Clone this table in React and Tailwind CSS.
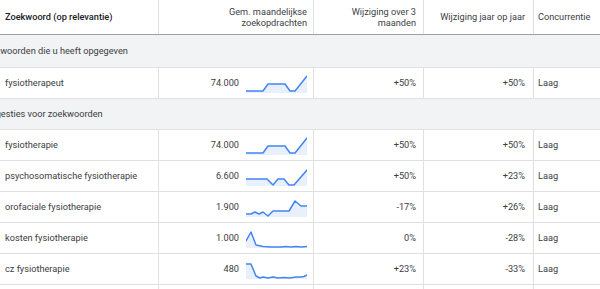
const groups = [
  {
    label: 'Zoekwoorden die u heeft opgegeven',
    height: 'h-[33px]',
    rows: [
      {
        keyword: 'fysiotherapeut',
        volume: '74.000',
        trend: [[0, 17], [17, 17], [22, 10], [39, 10], [44, 17], [49, 17], [61, 2]],
        threeMonths: '+50%',
        yoy: '+50%',
        competition: 'Laag',
      },
    ],
  },
  {
    label: 'Suggesties voor zoekwoorden',
    height: 'h-[31px]',
    rows: [
      {
        keyword: 'fysiotherapie',
        volume: '74.000',
        trend: [[0, 17], [17, 17], [22, 10], [39, 10], [44, 17], [49, 17], [61, 2]],
        threeMonths: '+50%',
        yoy: '+50%',
        competition: 'Laag',
      },
      {
        keyword: 'psychosomatische fysiotherapie',
        volume: '6.600',
        trend: [[0, 12], [21, 12], [27, 18], [32, 12], [38, 12], [43, 18], [48, 18], [61, 3]],
        threeMonths: '+50%',
        yoy: '+23%',
        competition: 'Laag',
      },
      {
        keyword: 'orofaciale fysiotherapie',
        volume: '1.900',
        trend: [[0, 16], [5, 16], [9, 14], [13, 16], [17, 14], [22, 18], [27, 13], [43, 13], [49, 3], [55, 8], [61, 8]],
        threeMonths: '-17%',
        yoy: '+26%',
        competition: 'Laag',
      },
      {
        keyword: 'kosten fysiotherapie',
        volume: '1.000',
        trend: [[0, 12], [5, 3], [10, 16], [17, 17.5], [25, 18], [35, 18], [40, 17.5], [45, 18], [50, 17.5], [55, 18], [61, 17.5]],
        threeMonths: '0%',
        yoy: '-28%',
        competition: 'Laag',
      },
      {
        keyword: 'cz fysiotherapie',
        volume: '480',
        trend: [[0, 4], [5, 4], [10, 16], [14, 18], [17, 17], [22, 18], [27, 17], [32, 18], [38, 17.5], [44, 18], [50, 17], [55, 17], [58, 16.5], [61, 15]],
        threeMonths: '+23%',
        yoy: '-33%',
        competition: 'Laag',
      },
      {
        keyword: '',
        volume: '',
        trend: null,
        threeMonths: '',
        yoy: '',
        competition: '',
      },
    ],
  },
];

const Sparkline = ({ points }) => {
  const line = points.map(([x, y]) => `${x},${y}`).join(' ');
  const area = `0,19 ${line} 61,19`;
  return (
    <svg width="61" height="19" viewBox="0 0 61 19" className="shrink-0">
      <polygon points={area} fill="#e8f0fe" />
      <polyline points={line} fill="none" stroke="#4285f4" strokeWidth="1.5" strokeLinejoin="round" strokeLinecap="round" />
    </svg>
  );
};

const cols = 'grid grid-cols-[159px_155px_110px_110px_1fr]';

const App = () => {
  return (
    <div className="w-[600px] h-[289px] overflow-hidden bg-white text-[9.2px] text-[#3c4043] font-['Roboto',sans-serif]">
      <div className={`${cols} h-[35px] border-b border-[#9aa0a6]`}>
        <div className="flex items-center pl-[5px] border-r border-[#e0e0e0] font-medium text-[#202124]">
          Zoekwoord (op relevantie)
        </div>
        <div className="flex items-center justify-end pr-[6px] border-r border-[#e0e0e0] text-right leading-[11px]">
          Gem. maandelijkse<br />zoekopdrachten
        </div>
        <div className="flex items-center justify-end pr-[7px] border-r border-[#e0e0e0] text-right leading-[11px]">
          Wijziging over 3<br />maanden
        </div>
        <div className="flex items-center justify-end pr-[8px] border-r border-[#e0e0e0] text-right">
          Wijziging jaar op jaar
        </div>
        <div className="flex items-center pl-[4px]">Concurrentie</div>
      </div>

      {groups.map((group) => (
        <div key={group.label}>
          <div className={`${group.height} flex items-center bg-[#f1f3f4] border-b border-[#e0e0e0] overflow-hidden`}>
            <span className="-ml-[20px] whitespace-nowrap">{group.label}</span>
          </div>
          {group.rows.map((row, i) => (
            <div key={i} className={`${cols} h-[31px] border-b border-[#e0e0e0]`}>
              <div className="flex items-center pl-[5px] border-r border-[#e0e0e0] whitespace-nowrap">{row.keyword}</div>
              <div className="flex items-center justify-end gap-[7px] pr-[6px] border-r border-[#e0e0e0]">
                <span>{row.volume}</span>
                {row.trend && <Sparkline points={row.trend} />}
              </div>
              <div className="flex items-center justify-end pr-[7px] border-r border-[#e0e0e0]">{row.threeMonths}</div>
              <div className="flex items-center justify-end pr-[8px] border-r border-[#e0e0e0]">{row.yoy}</div>
              <div className="flex items-center pl-[4px]">{row.competition}</div>
            </div>
          ))}
        </div>
      ))}
    </div>
  );
};

export default App;
